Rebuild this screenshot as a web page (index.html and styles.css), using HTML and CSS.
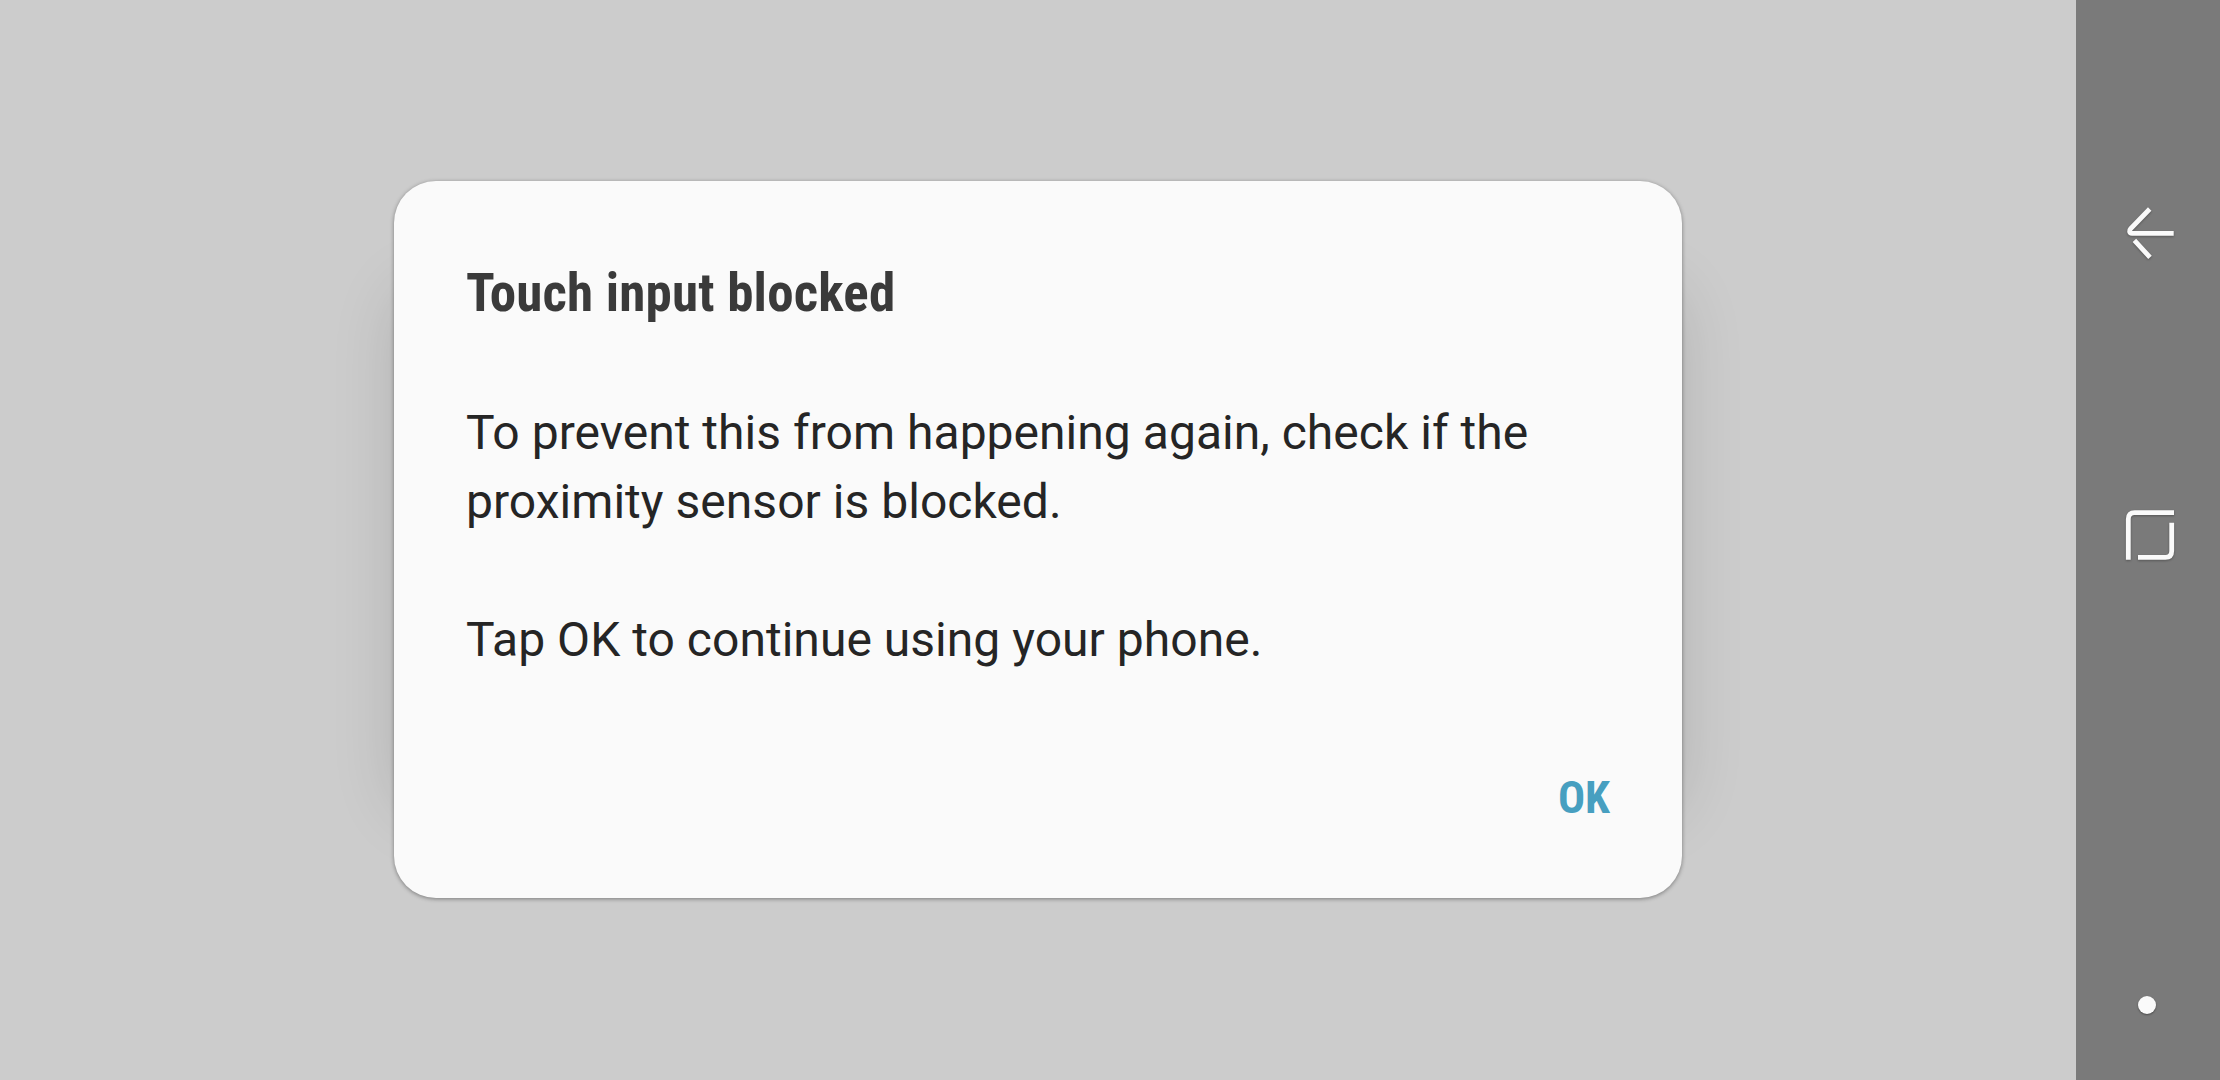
FILE: index.html
```html
<!DOCTYPE html>
<html lang="en">
<head>
<meta charset="utf-8">
<title>Touch input blocked</title>
<link rel="stylesheet" href="styles.css">
</head>
<body>
<main class="screen">
  <section class="dialog" role="alertdialog">
    <h1 class="title">Touch input blocked</h1>
    <p class="message">To prevent this from happening again, check if the<br>proximity sensor is blocked.</p>
    <p class="message">Tap OK to continue using your phone.</p>
    <button class="ok">OK</button>
  </section>
</main>
<nav class="navbar">
  <svg class="icon back" viewBox="0 0 60 60"><path d="M55.7 30.3H14C11 30.3 11 27.3 12.6 25.7L31.7 6M16.4 37.4L32 54.3"/></svg>
  <svg class="icon recent" viewBox="0 0 60 60"><path d="M10.3 54.7V14Q10.3 7.7 16.6 7.7H56M53.7 17.7V46Q53.7 52.3 47.4 52.3H20"/></svg>
  <span class="dot"></span>
</nav>
</body>
</html>
```
FILE: styles.css
```css
* { box-sizing: border-box; margin: 0; }
body { display: flex; height: 1080px; overflow: hidden; background: #ccc; font-family: "Roboto", sans-serif; }
.screen { flex: 1; display: flex; justify-content: center; align-items: flex-start; padding-top: 181px; }
.dialog { position: relative; z-index: 0; width: 1288px; height: 717px; padding: 73px 72px 0; display: flex; flex-direction: column; }
/* wide ambient shadow, visible only beside the card */
.dialog::before { content: ""; position: absolute; z-index: -2; inset: 103px 0 81px; border-radius: 42px; box-shadow: 0 0 64px rgba(0,0,0,.13); }
.dialog::after { content: ""; position: absolute; z-index: -1; inset: 0; border-radius: 42px; background: #fafafa; box-shadow: 0 1px 4px rgba(0,0,0,.4); }
.title { font: bold 53px/78px "Roboto Condensed", "Roboto", sans-serif; letter-spacing: .2px; color: #3a3a3a; margin-bottom: 66px; }
.message { font-size: 48px; line-height: 69px; letter-spacing: .03px; color: #252525; margin-bottom: 69px; white-space: nowrap; }
.ok { align-self: flex-end; margin-top: 25px; border: 0; padding: 0; background: none; font: bold 45px/60px "Roboto Condensed", "Roboto", sans-serif; color: #479fc0; }
.navbar { width: 144px; background: #7a7a7a; display: flex; flex-direction: column; align-items: center; }
.icon { width: 60px; height: 60px; fill: none; stroke: #fafafa; stroke-width: 4.8; filter: drop-shadow(0 1px 1px rgba(0,0,0,.3)); }
.back { margin-top: 203px; }
.recent { margin-top: 242px; }
.dot { width: 18px; height: 18px; border-radius: 50%; background: #fafafa; margin: 431px 1.5px 0 0; box-shadow: 0 1px 2px rgba(0,0,0,.4); }
```
